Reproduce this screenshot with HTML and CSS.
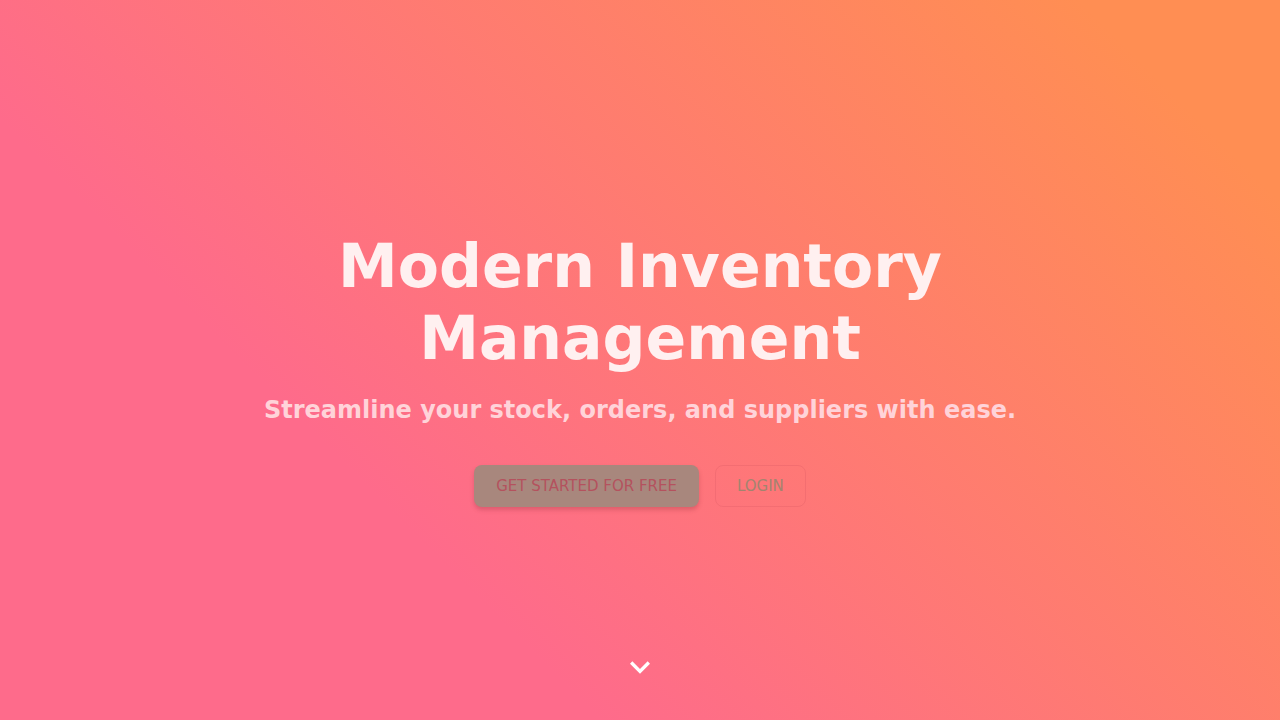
FILE: index.html
```html
<!DOCTYPE html>
<html lang="en">
<head>
<meta charset="utf-8">
<title>Modern Inventory Management</title>
<link rel="stylesheet" href="styles.css">
</head>
<body>
<main class="hero">
  <div class="hero-content">
    <h1 class="hero-title">Modern Inventory Management</h1>
    <p class="hero-subtitle">Streamline your stock, orders, and suppliers with ease.</p>
    <div class="hero-actions">
      <a class="btn btn-primary" href="#">Get Started for Free</a>
      <a class="btn btn-outline" href="#">Login</a>
    </div>
  </div>
  <div class="scroll-hint">
    <svg viewBox="0 0 24 24" width="40" height="40" aria-hidden="true"><path d="M7.41 8.59 12 13.17l4.59-4.58L18 10l-6 6-6-6 1.41-1.41z" fill="#ffffff"/></svg>
  </div>
</main>
</body>
</html>
```
FILE: styles.css
```css
html, body {
  margin: 0;
  padding: 0;
  height: 100%;
}
body {
  font-family: "DejaVu Sans", "Liberation Sans", sans-serif;
}
.hero {
  position: relative;
  height: 720px;
  display: flex;
  align-items: center;
  justify-content: center;
  background: linear-gradient(45deg, #fe6b8b 30%, #ff8e53 90%);
  overflow: hidden;
}
.hero-content {
  max-width: 900px;
  padding: 0 24px;
  text-align: center;
  margin-top: 17px;
}
.hero-title {
  margin: 0 0 18px;
  font-size: 60px;
  line-height: 1.2;
  font-weight: 700;
  color: #fff0f0;
}
.hero-subtitle {
  margin: 0;
  font-size: 24px;
  line-height: 1.5;
  font-weight: 700;
  color: #ffd3d9;
}
.hero-actions {
  margin-top: 37px;
  display: flex;
  justify-content: center;
  gap: 16px;
}
.btn {
  display: inline-block;
  font-size: 15px;
  line-height: 26px;
  text-transform: uppercase;
  text-decoration: none;
  border-radius: 8px;
}
.btn-primary {
  padding: 8px 22px;
  background: #a8877d;
  color: #b4525e;
  box-shadow: 0 3px 4px rgba(150, 50, 60, 0.3);
}
.btn-outline {
  padding: 7px 21px;
  border: 1px solid rgba(220, 90, 100, 0.3);
  color: #a3846f;
}
.scroll-hint {
  position: absolute;
  left: 50%;
  bottom: 33px;
  transform: translateX(-50%);
  width: 40px;
  height: 40px;
}
.scroll-hint svg {
  display: block;
}
```
